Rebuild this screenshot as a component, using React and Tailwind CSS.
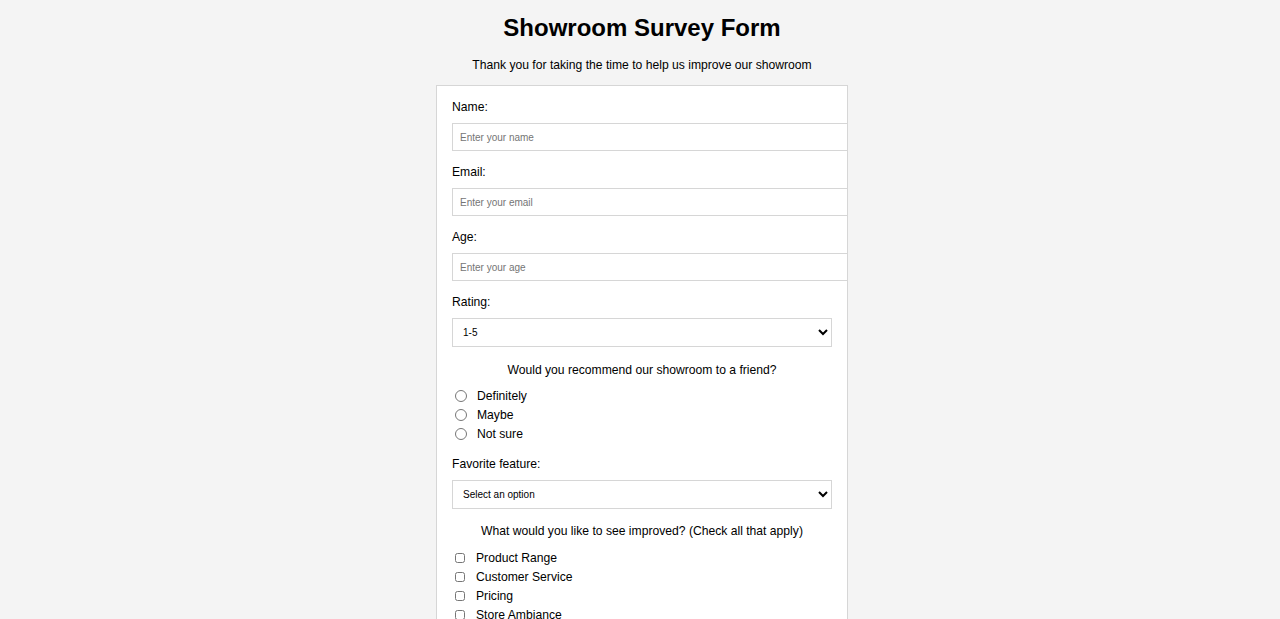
export default function App() {
  const font = { fontFamily: '"Liberation Sans", Arial, sans-serif' };
  return (
    <div className="min-h-[619px] bg-[#f4f4f4] pl-[4px] text-black" style={font}>
      <h1 className="pt-[13px] text-center text-[24px] font-bold leading-[30px]">
        Showroom Survey Form
      </h1>
      <p className="mt-[15px] text-center text-[12.15px] leading-[14px]">
        Thank you for taking the time to help us improve our showroom
      </p>
      <div className="mx-auto mt-[13px] w-[412px] border border-[#d6d6d6] bg-white px-[15px] pt-[14px] pb-6">
        <SurveyForm />
      </div>
    </div>
  );
}

function Field({ label, placeholder, type = "text" }) {
  return (
    <div className="mb-[14px]">
      <label className="block text-[12.15px] leading-[14px]">{label}</label>
      <input
        type={type}
        placeholder={placeholder}
        className="mt-[9px] box-content block h-[26px] w-full border border-[#d6d6d6] bg-white px-[7px] text-[10px] placeholder:text-[#757575] outline-none"
      />
    </div>
  );
}

function Dropdown({ label, options }) {
  return (
    <div>
      <label className="block text-[12.15px] leading-[14px]">{label}</label>
      <select className="mt-[9px] block h-[29px] w-full border border-[#d6d6d6] bg-white px-[6px] text-[10px] outline-none">
        {options.map((o) => (
          <option key={o}>{o}</option>
        ))}
      </select>
    </div>
  );
}

function SurveyForm() {
  const radios = ["Definitely", "Maybe", "Not sure"];
  const checks = ["Product Range", "Customer Service", "Pricing", "Store Ambiance"];
  return (
    <form>
      <Field label="Name:" placeholder="Enter your name" />
      <Field label="Email:" placeholder="Enter your email" type="email" />
      <Field label="Age:" placeholder="Enter your age" type="number" />
      <Dropdown label="Rating:" options={["1-5", "1", "2", "3", "4", "5"]} />

      <p className="mt-[16px] text-center text-[12.15px] leading-[14px]">
        Would you recommend our showroom to a friend?
      </p>
      <div className="mt-[9px] flex flex-col">
        {radios.map((r) => (
          <label key={r} className="flex h-[19px] items-center text-[12.15px]">
            <input type="radio" name="recommend" className="ml-[3px] h-[12px] w-[12px]" />
            <span className="ml-[10px] pt-[2px]">{r}</span>
          </label>
        ))}
      </div>

      <div className="mt-[14px]">
        <Dropdown label="Favorite feature:" options={["Select an option", "Design", "Location", "Staff"]} />
      </div>

      <p className="mt-[15px] text-center text-[12.15px] leading-[14px]">
        What would you like to see improved? (Check all that apply)
      </p>
      <div className="mt-[10px] flex flex-col">
        {checks.map((c) => (
          <label key={c} className="flex h-[19px] items-center text-[12.15px]">
            <input type="checkbox" className="ml-[3px] h-[10px] w-[10px]" />
            <span className="ml-[11px] pt-[2px]">{c}</span>
          </label>
        ))}
      </div>
    </form>
  );
}
